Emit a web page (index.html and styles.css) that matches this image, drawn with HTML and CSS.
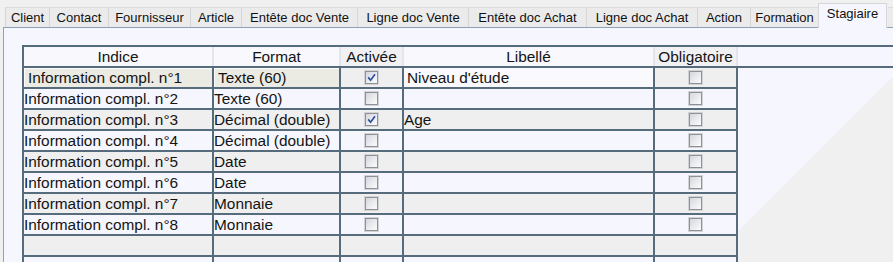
FILE: index.html
```html
<!DOCTYPE html>
<html lang="fr">
<head>
<meta charset="utf-8">
<title>Stagiaire</title>
<link rel="stylesheet" href="styles.css">
</head>
<body>
<div class="tabs">
  <div class="tab w-client">Client</div>
  <div class="tab w-contact">Contact</div>
  <div class="tab w-fourn">Fournisseur</div>
  <div class="tab w-article">Article</div>
  <div class="tab w-ev">Entête doc Vente</div>
  <div class="tab w-lv">Ligne doc Vente</div>
  <div class="tab w-ea">Entête doc Achat</div>
  <div class="tab w-la">Ligne doc Achat</div>
  <div class="tab w-action">Action</div>
  <div class="tab w-form">Formation</div>
  <div class="tab active w-stag">Stagiaire</div>
  <div class="tab w-more"></div>
</div>
<div class="panel">
  <div class="grid">
    <div class="head">
      <div class="hcell c-ind first">Indice</div>
      <div class="hcell c-fmt">Format</div>
      <div class="hcell c-act grey">Activée</div>
      <div class="hcell c-lib">Libellé</div>
      <div class="hcell c-obl grey">Obligatoire</div>
      <div class="hfill"></div>
    </div>
    <div class="row odd sel">
      <div class="cell c-ind first s">Information compl. n°1</div>
      <div class="cell c-fmt s">Texte (60)</div>
      <div class="cell c-act"><span class="cb"><svg viewBox="0 0 11 11" width="11" height="11"><path d="M2.2 5.4 L4.6 8.2 L9 2.2" fill="none" stroke="#2f4f9f" stroke-width="1.7"/></svg></span></div>
      <div class="cell c-lib edit">Niveau d'étude</div>
      <div class="cell c-obl"><span class="cb"></span></div>
    </div>
    <div class="row even">
      <div class="cell c-ind first">Information compl. n°2</div>
      <div class="cell c-fmt">Texte (60)</div>
      <div class="cell c-act"><span class="cb"></span></div>
      <div class="cell c-lib"></div>
      <div class="cell c-obl"><span class="cb"></span></div>
    </div>
    <div class="row odd">
      <div class="cell c-ind first">Information compl. n°3</div>
      <div class="cell c-fmt">Décimal (double)</div>
      <div class="cell c-act"><span class="cb"><svg viewBox="0 0 11 11" width="11" height="11"><path d="M2.2 5.4 L4.6 8.2 L9 2.2" fill="none" stroke="#2f4f9f" stroke-width="1.7"/></svg></span></div>
      <div class="cell c-lib">Age</div>
      <div class="cell c-obl"><span class="cb"></span></div>
    </div>
    <div class="row even">
      <div class="cell c-ind first">Information compl. n°4</div>
      <div class="cell c-fmt">Décimal (double)</div>
      <div class="cell c-act"><span class="cb"></span></div>
      <div class="cell c-lib"></div>
      <div class="cell c-obl"><span class="cb"></span></div>
    </div>
    <div class="row odd">
      <div class="cell c-ind first">Information compl. n°5</div>
      <div class="cell c-fmt">Date</div>
      <div class="cell c-act"><span class="cb"></span></div>
      <div class="cell c-lib"></div>
      <div class="cell c-obl"><span class="cb"></span></div>
    </div>
    <div class="row even">
      <div class="cell c-ind first">Information compl. n°6</div>
      <div class="cell c-fmt">Date</div>
      <div class="cell c-act"><span class="cb"></span></div>
      <div class="cell c-lib"></div>
      <div class="cell c-obl"><span class="cb"></span></div>
    </div>
    <div class="row odd">
      <div class="cell c-ind first">Information compl. n°7</div>
      <div class="cell c-fmt">Monnaie</div>
      <div class="cell c-act"><span class="cb"></span></div>
      <div class="cell c-lib"></div>
      <div class="cell c-obl"><span class="cb"></span></div>
    </div>
    <div class="row even">
      <div class="cell c-ind first">Information compl. n°8</div>
      <div class="cell c-fmt">Monnaie</div>
      <div class="cell c-act"><span class="cb"></span></div>
      <div class="cell c-lib"></div>
      <div class="cell c-obl"><span class="cb"></span></div>
    </div>
    <div class="row odd">
      <div class="cell c-ind first"></div>
      <div class="cell c-fmt"></div>
      <div class="cell c-act"></div>
      <div class="cell c-lib"></div>
      <div class="cell c-obl"></div>
    </div>
    <div class="row even">
      <div class="cell c-ind first"></div>
      <div class="cell c-fmt"></div>
      <div class="cell c-act"></div>
      <div class="cell c-lib"></div>
      <div class="cell c-obl"></div>
    </div>
  </div>
</div>
</body>
</html>
```

FILE: styles.css
```css
* { box-sizing: border-box; }
html, body {
  margin: 0;
  padding: 0;
  overflow: hidden;
}
body {
  width: 893px;
  height: 262px;
  background: #f0f0f0;
  font-family: "Liberation Sans", Arial, sans-serif;
  color: #141414;
}

/* Tabs */
.tabs {
  display: flex;
  align-items: flex-end;
  height: 27px;
  padding-left: 5px;
}
.tab {
  height: 20px;
  background: #ebebeb;
  border-top: 1px solid #dcdcdc;
  border-left: 1px solid #d6d6d6;
  font-size: 13px;
  line-height: 19px;
  text-align: center;
  white-space: nowrap;
  color: #111;
  flex: none;
}
.tab.active {
  height: 25px;
  margin-bottom: -1px;
  background: #f6f7fe;
  border: 1px solid #d6d6d6;
  border-bottom: none;
  line-height: 20px;
  position: relative;
  z-index: 2;
}
.tab.active + .tab { border-left: none; }
.w-client { width: 44px; }
.w-contact { width: 59px; }
.w-fourn { width: 82px; }
.w-article { width: 51px; }
.w-ev { width: 116px; }
.w-lv { width: 111px; }
.w-ea { width: 118px; }
.w-la { width: 111px; }
.w-action { width: 53px; }
.w-form { width: 68px; }
.w-stag { width: 69px; }
.w-more { width: 6px; border-left: 1px solid #d6d6d6; margin-left: 1px; }

/* Panel */
.panel {
  margin-left: 3px;
  height: 235px;
  border-top: 1px solid #8ea3bb;
  border-left: 1px solid #8ea3bb;
  background: linear-gradient(135deg, #f6f7fe 83.5%, #f0f0f0 83.5%);
  padding: 17px 0 0 18px;
  overflow: hidden;
  position: relative;
  z-index: 1;
}
.grid {
  display: flex;
  flex-direction: column;
}

/* Header */
.head {
  display: flex;
  height: 23px;
  border-top: 2px solid #566c7c;
  border-bottom: 2px solid #566c7c;
}
.hcell {
  flex: none;
  height: 19px;
  font-size: 15.4px;
  line-height: 19px;
  text-align: center;
  border-right: 2px solid #e4e5ea;
  background: #f8f8fd;
}
.hcell.first { border-left: 2px solid #566c7c; }
.hcell.grey { background: #f1f1f3; }
.hfill { flex: 1; }

/* Rows */
.row {
  display: flex;
  height: 21px;
  border-bottom: 2px solid #566c7c;
  width: 716px;
}
.row.odd { background: #efefef; }
.row.even { background: #f6f7fe; }
.cell {
  flex: none;
  height: 19px;
  font-size: 15.4px;
  line-height: 19px;
  padding-left: 0;
  white-space: nowrap;
  overflow: hidden;
  border-right: 2px solid #566c7c;
  display: flex;
  align-items: center;
}
.cell.first { border-left: 2px solid #566c7c; }
.cell.s {
  background: #ebeae3;
  padding-left: 4px;
  box-shadow: inset 0 1px 0 #fbfbfb, inset 1px 0 0 #fbfbfb;
}
.cell.edit { background: #f9f9fe; padding-left: 3px; }
.c-act, .c-obl { justify-content: center; padding-left: 0; }

.c-ind { width: 190px; }
.c-ind.first { width: 192px; }
.c-fmt { width: 127px; }
.c-act { width: 63px; }
.c-lib { width: 251px; }
.c-obl { width: 83px; }

/* Checkbox */
.cb {
  width: 13px;
  height: 13px;
  border: 1px solid #8f9194;
  box-shadow: 0 0 0 1px #d2d3d6;
  background: linear-gradient(135deg, #d3d6de 0%, #e9eaee 50%, #fbfbfb 100%);
  display: flex;
  align-items: center;
  justify-content: center;
}
.cb svg { display: block; }
```
